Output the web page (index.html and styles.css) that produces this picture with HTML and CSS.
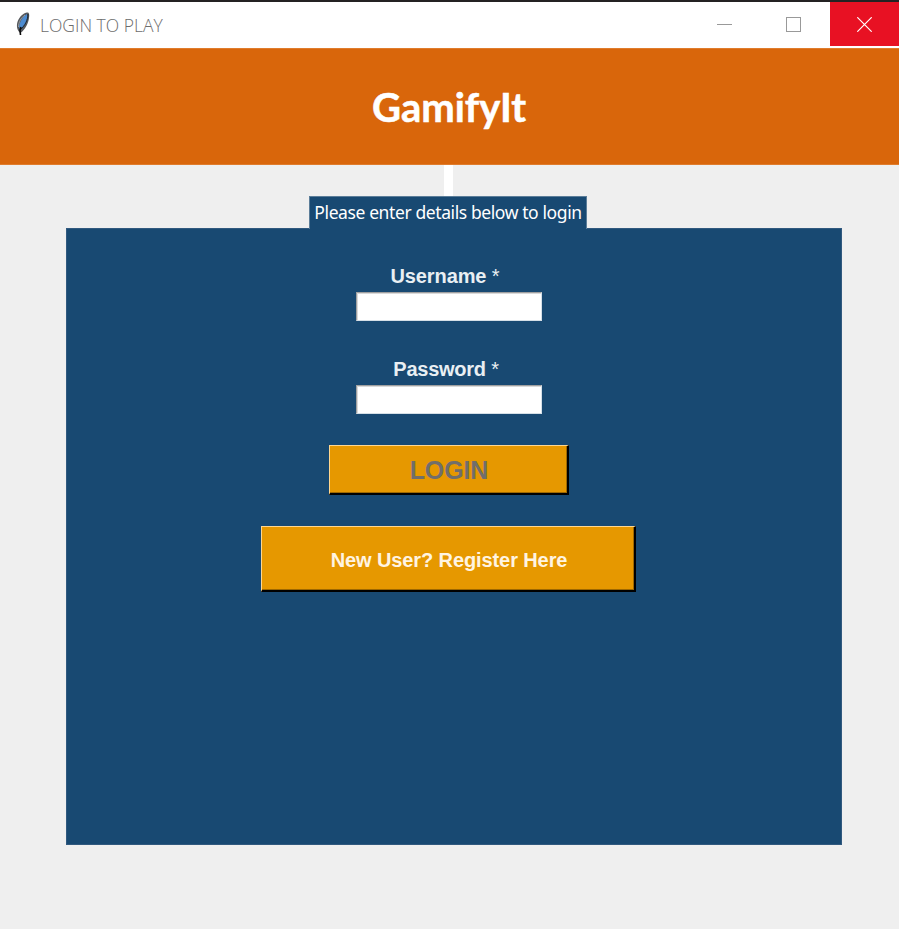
FILE: index.html
```html
<!DOCTYPE html>
<html lang="en">
<head>
<meta charset="utf-8">
<title>LOGIN TO PLAY</title>
<link rel="stylesheet" href="styles.css">
</head>
<body>
<div class="window">
  <header class="titlebar">
    <svg class="feather" width="16" height="26" viewBox="0 0 16 26">
      <path d="M12 1.500 C14 1 14.600 3 14 7 C13.500 12 10 19 5.500 22 C1.800 20 1 14 3 9.500 C5 5 9 2 12 1.500Z" fill="#55585c"/>
      <path d="M12 3 C9 4.500 5.500 9 4 15 L5 18.500 C10 15 13 8 12 3Z" fill="#4c8bd0"/>
      <path d="M13 3 C13 9 10 14.500 5.500 18.500" fill="none" stroke="#182636" stroke-width="1"/>
      <path d="M10 4 C6 7 3.500 11 3.500 16" fill="none" stroke="#9a9da0" stroke-width="1"/>
      <path d="M6 16 L5 19 L5.500 24" fill="none" stroke="#0b0b0b" stroke-width="1.600"/>
    </svg>
    <span class="caption">LOGIN TO PLAY</span>
    <div class="controls">
      <div class="control"><svg width="15" height="15" viewBox="0 0 15 15"><path d="M0 7.500H15" stroke="#999"/></svg></div>
      <div class="control"><svg width="15" height="15" viewBox="0 0 15 15"><rect x=".5" y=".5" width="14" height="14" fill="none" stroke="#999"/></svg></div>
      <div class="control close"><svg width="15" height="15" viewBox="0 0 15 15"><path d="M.3 .3L14.700 14.700M14.700 .3L.3 14.700" stroke="#fff" stroke-width="1.200"/></svg></div>
    </div>
  </header>
  <h1 class="banner"><span class="brand">GamifyIt</span></h1>
  <div class="stem"></div>
  <div class="prompt"><span class="prompt-text">Please enter details below to login</span></div>
  <main class="panel">
    <label class="label user" for="u">Username <span class="star">*</span></label>
    <input class="field" id="u" type="text">
    <label class="label pass" for="p">Password <span class="star">*</span></label>
    <input class="field" id="p" type="password">
    <button class="button login" type="button">LOGIN</button>
    <button class="button register" type="button">New User? Register Here</button>
  </main>
</div>
</body>
</html>
```
FILE: styles.css
```css
* { box-sizing: border-box; }
body { margin: 0; background: #efefef; }
.window { height: 929px; border-top: 2px solid #242223; display: flex; flex-direction: column; align-items: center; overflow: hidden; }
.titlebar { width: 100%; height: 46px; flex: none; background: #fff; display: flex; align-items: flex-start; }
.feather { margin: 9px 0 0 15px; }
.caption { margin: 10px 0 0 9px; font: 300 17.5px/27px "Open Sans", sans-serif; color: #6c6c6c; white-space: nowrap; }
.controls { display: flex; margin-left: auto; }
.control { width: 69px; height: 44px; display: flex; align-items: center; justify-content: center; }
.control:nth-child(2) { width: 71px; padding-right: 2px; }
.control.close { background: #e81123; }
.banner { width: 100%; height: 117px; flex: none; margin: 0; padding-right: 1px; background: #d9660b; border-top: 1px solid #e07c2c; border-bottom: 1px solid #e07c2c; text-align: center; color: #fff; font: 700 40px/117px Lato, sans-serif; -webkit-text-stroke: .5px #fff; }
.stem { width: 9px; height: 31px; flex: none; margin-right: 2px; background: #fff; }
.prompt { width: 278px; height: 33px; flex: none; margin-right: 3px; margin-bottom: -1px; z-index: 1; background: #184972; border: 1px solid #5b7d99; border-bottom: 0; color: #fff; font: 17.5px/31px "Noto Sans", sans-serif; letter-spacing: -.4px; white-space: nowrap; display: flex; justify-content: center; }
.panel { width: 776px; height: 617px; flex: none; margin: 0 0 0 9px; padding-right: 10px; background: #184972; box-shadow: inset 0 0 0 1px #31597f; display: flex; flex-direction: column; align-items: center; }
.label { font: 700 20px/24px "Liberation Sans", sans-serif; letter-spacing: -.1px; color: #e9eff3; margin-right: 8px; }
.star { font-weight: 400; }
.user { margin-top: 36px; }
.pass { margin-top: 36px; margin-right: 6px; letter-spacing: -.25px; }
.field { width: 186px; height: 29px; margin: 4px 0 0; padding: 2px; background: #fff; border: 1px solid #d5dfe7; border-top-color: #a0a0a0; border-left-color: #a0a0a0; box-shadow: inset 1px 1px #d9d9d9; border-radius: 0; outline: 0; }
.button { padding: 0; border: 1px solid #000; border-top-color: #ffd790; border-left-color: #ffd790; border-right-width: 2px; border-bottom-width: 2px; background: #e69800; box-shadow: inset -1px -1px #9e6800; font-family: "Liberation Sans", sans-serif; font-weight: 700; }
.login { width: 240px; height: 50px; margin-top: 31px; padding: 1px 0 0 1px; color: #716e6b; font-size: 25px; letter-spacing: -.1px; }
.register { width: 375px; height: 66px; margin-top: 31px; margin-right: 1px; padding: 3px 0 0 2px; color: #fff4e2; font-size: 20px; letter-spacing: -.1px; }
```
